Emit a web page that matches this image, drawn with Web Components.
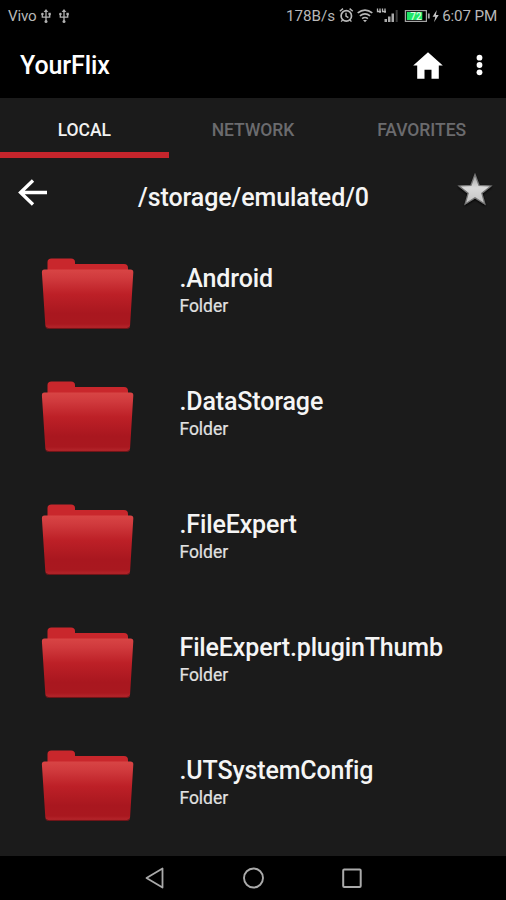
<!DOCTYPE html>
<html lang="en"><head><meta charset="utf-8"><title>YourFlix</title>
<style>
html,body{margin:0;height:100%;background:#1b1b1b}
body{font-family:Roboto,"Liberation Sans",sans-serif;color:#fff;overflow:hidden}
</style></head><body>
<yf-app></yf-app>
<script>
const define = (name, html) => customElements.define(name, class extends HTMLElement {
  constructor() {
    super();
    const t = document.createElement('template');
    t.innerHTML = html;
    this.attachShadow({mode: 'open'}).append(t.content.cloneNode(true));
  }
});

define('yf-usb', `<style>:host{display:block;width:10px;height:15px}svg{display:block}</style>
<svg width="10" height="15" viewBox="0 0 10 15" fill="none" stroke="#b0b0b0" stroke-width="1.3">
<path d="M5 2v11M1.300 5v3.200H8.700V5"/><path d="M5 0 7.300 3H2.700z" fill="#b0b0b0" stroke="none"/>
<circle cx="1.400" cy="5" r="1.300" fill="#b0b0b0" stroke="none"/><path d="M7.400 3.800h2.400v2.400H7.400z" fill="#b0b0b0" stroke="none"/><circle cx="5" cy="12.600" r="1.500" fill="#b0b0b0" stroke="none"/></svg>`);

define('yf-status', `<style>
:host{display:flex;height:32px;box-sizing:border-box;padding:0 9px 0 8px;background:#000;color:#b8b8b8;font-size:15.200px;align-items:center;justify-content:space-between}
div{display:flex;align-items:center}svg{display:block}
.carrier{letter-spacing:-.2px;margin-right:5px}yf-usb+yf-usb{margin-left:8px}
.rate{margin-right:4px}.clock{margin-left:3px;letter-spacing:-.150px}
</style>
<div><span class="carrier">Vivo</span><yf-usb></yf-usb><yf-usb></yf-usb></div>
<div><span class="rate">178B/s</span>
<svg width="100" height="18" viewBox="0 0 100 18" fill="none" stroke="#b8b8b8">
<circle cx="7.300" cy="8.900" r="5.200" stroke-width="1.700"/><path d="M.8 4.300 4 1.600M10.600 1.600l3.200 2.700M7 5.800v3.400l2.400 1.500M3.600 12.900l-1.400 1.700M11 12.900l1.400 1.700" stroke-width="1.400"/>
<path d="M18.700 5.900q7.300-5.700 14.600 0M20.900 8.800q5.100-4 10.200 0M23.100 11.600q2.900-2.200 5.800 0" stroke-width="1.700"/><path d="M24 13h4L26 15.300z" fill="#b8b8b8" stroke="none"/>
<path d="M38.500 1.500v3H42M41 1.500v4.500M43.500 1.500v3H47M46 1.500v4.500" stroke-width="1.300"/>
<path d="M45.500 12h2.500v3h-2.500zM49 9.500h2.500V15H49zM52.500 6.500h2.500V15h-2.500z" fill="#aaa" stroke="none"/><path d="M57.700 3V15" stroke="#3c3c3c" stroke-width="2"/>
<g transform="translate(.8)"><rect x="65.600" y="3.600" width="21" height="10.800" stroke="#a5a5a5" stroke-width="1.200"/><path d="M67 5h15.500v8H67z" fill="#20e667" stroke="none"/><path d="M89 6.500v5" stroke="#aaa" stroke-width="1.800"/>
<text x="70.500" y="12.600" font-size="10" font-weight="500" fill="#d2ffdc" stroke="none">72</text>
<path d="M97 3 92.800 9.700h2.700L94.200 15.200l4.700-7.200h-2.800z" fill="#c4c4c4" stroke="none"/></g></svg>
<span class="clock">6:07 PM</span></div>`);

define('yf-appbar', `<style>
:host{display:flex;height:66px;box-sizing:border-box;padding:1px 22px 0 20px;background:#000;align-items:center}
h1{margin:0;flex:1;font-size:25px;letter-spacing:-.1px;font-weight:500;line-height:28px}svg{display:block}.more{margin-left:32px}
</style><h1><slot></slot></h1>
<svg width="30" height="28" viewBox="0 0 30 28" fill="#fff"><path d="M15 .3.2 13.500h4v13.300h7.300v-9h7v9h7.300V13.500h4z"/></svg>
<svg class="more" width="9" height="24" viewBox="0 0 9 24" fill="#fff"><circle cx="4.500" cy="3.700" r="2.900"/><circle cx="4.500" cy="11" r="2.900"/><circle cx="4.500" cy="18.300" r="2.900"/></svg>`);

define('yf-tab', `<style>
:host{display:flex;flex:1;height:60px;box-sizing:border-box;border-bottom:6px solid transparent;padding-top:9px;justify-content:center;align-items:center;font-size:17.500px;letter-spacing:-.02px;font-weight:500;color:#6b6b6e}
:host([active]){color:#f2f2f2;border-color:#c5252c}
</style><slot></slot>`);
define('yf-tabs', `<style>:host{display:flex;height:60px}</style><slot></slot>`);

define('yf-path', `<style>
:host{display:flex;height:74px;box-sizing:border-box;padding:0 13px 0 18px;align-items:flex-start}
svg{display:block}.back{margin-top:21px}.star{margin-top:14px}
span{flex:1;text-align:center;padding:25px 0 0 2px;font-size:25px;letter-spacing:-.1px;line-height:30px;font-weight:500;color:#f5f5f5}
</style>
<svg class="back" width="30" height="28" viewBox="0 0 30 28" fill="none" stroke="#fff" stroke-width="3.300"><path d="M29 13.500H2.500M15 1.500l-12.500 12 12.500 12"/></svg>
<span><slot></slot></span>
<svg class="star" width="36" height="36" viewBox="0 0 36 36"><defs><linearGradient id="g" x2="0" y2="1"><stop stop-color="#a0a0a0"/><stop offset=".45" stop-color="#dadada"/><stop offset="1" stop-color="#c2c2c2"/></linearGradient><filter id="s" x="-20%" y="-20%" width="140%" height="140%"><feDropShadow dx="0" dy="1.200" stdDeviation="1" flood-color="#000"/></filter></defs>
<path d="m18 2.500 4 10.800 12 .7-9.200 7.300 3 10.700L18 25.800 8.200 32l3-10.700L2 14l12-.7z" fill="url(#g)" stroke="#777" stroke-width="1.200" filter="url(#s)"/></svg>`);

define('yf-folder-icon', `<style>:host,svg{display:block}</style>
<svg width="94" height="74" viewBox="0 0 94 74"><defs>
<linearGradient id="f" x2="0" y2="1"><stop stop-color="#d84545"/><stop offset=".15" stop-color="#d03a3d"/><stop offset=".42" stop-color="#bd2027"/><stop offset=".75" stop-color="#a9171f"/><stop offset=".93" stop-color="#a9181f"/><stop offset="1" stop-color="#b5262c"/></linearGradient></defs>
<path d="M7.500 20V5q0-3.500 4-3.500h19.500q4 0 4 3.500v2h49q4 0 4 4v10z" fill="#c9272c"/>
<path d="M4.500 12.500h86q3 0 2.800 3l-3.200 52.500q-.2 3-3.200 3H8.500q-3 0-3.200-3L1.900 15.500Q1.700 12.500 4.500 12.500z" fill="url(#f)"/>
<path d="M5.500 70q1 1.400 3 1.400h78.400q2 0 3-1.400" fill="none" stroke="#7d1519" stroke-width="1"/></svg>`);

define('yf-folder', `<style>
:host{display:flex;height:123px;box-sizing:border-box;padding-left:40px;align-items:flex-start}
yf-folder-icon{margin-top:25px}
.copy{margin-left:45.500px;padding-top:32px}
.name{font-size:25px;letter-spacing:-.140px;line-height:30px;font-weight:500;color:#f5f5f5;white-space:nowrap}
.type{font-size:17.500px;letter-spacing:-.05px;line-height:24px;color:#e2e2e2;-webkit-text-stroke:.2px #e2e2e2}
</style><yf-folder-icon></yf-folder-icon><div class="copy"><div class="name"><slot></slot></div><div class="type">Folder</div></div>`);

define('yf-nav', `<style>
:host{display:flex;height:44px;background:#000;justify-content:center;gap:75px;align-items:center}svg{display:block}
</style>
<svg width="24" height="24" viewBox="0 0 24 24" fill="none" stroke="#aaa" stroke-width="1.800" stroke-linejoin="round"><path d="M20.500 2.500v19L4.500 12z"/></svg>
<svg width="24" height="24" viewBox="0 0 24 24" fill="none" stroke="#aaa" stroke-width="1.900"><circle cx="12.500" cy="12" r="9.500"/></svg>
<svg width="24" height="24" viewBox="0 0 24 24" fill="none" stroke="#aaa" stroke-width="2"><rect x="3.200" y="3.500" width="17.500" height="17.500" rx="1"/></svg>`);

define('yf-app', `<style>
:host{display:flex;flex-direction:column;height:100vh;background:#1b1b1b}
main{flex:1;min-height:0;overflow:hidden}
</style>
<yf-status></yf-status><yf-appbar>YourFlix</yf-appbar>
<yf-tabs><yf-tab active>LOCAL</yf-tab><yf-tab>NETWORK</yf-tab><yf-tab>FAVORITES</yf-tab></yf-tabs>
<yf-path>/storage/emulated/0</yf-path>
<main><yf-folder>.Android</yf-folder><yf-folder>.DataStorage</yf-folder><yf-folder>.FileExpert</yf-folder><yf-folder>FileExpert.pluginThumb</yf-folder><yf-folder>.UTSystemConfig</yf-folder></main>
<yf-nav></yf-nav>`);
</script></body></html>
